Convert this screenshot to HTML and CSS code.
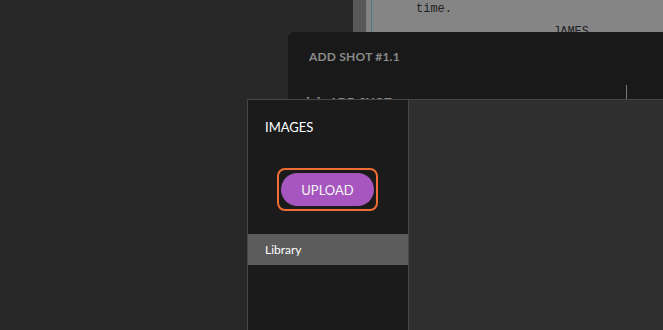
FILE: index.html
```html
<!DOCTYPE html>
<html lang="en">
<head>
    <meta charset="UTF-8">
    <title>Add Shot - Images</title>
    <link rel="stylesheet" href="styles.css">
</head>
<body>
    <!-- script page behind the dialogs -->
    <div class="script-page">
        <div class="page-gutter"></div>
        <div class="page-sheet">
            <p class="line action">time.</p>
            <p class="line character">JAMES</p>
        </div>
    </div>

    <div class="shot-dialog">
        <h4 class="dialog-title">ADD SHOT #1.1</h4>
        <div class="dialog-row">
            <span class="toggle"><span class="bracket">[&ndash;]</span>ADD SHOT</span>
            <span class="divider"></span>
        </div>
    </div>

    <div class="images-panel">
        <div class="sidebar">
            <h3 class="sidebar-title">IMAGES</h3>
            <div class="upload-wrap">
                <button class="btn-upload">UPLOAD</button>
            </div>
            <div class="nav-item active">Library</div>
        </div>
        <div class="content"></div>
    </div>
</body>
</html>
```

FILE: styles.css
```css
body {
    background-color: #282828;
    font-family: Lato, 'Open Sans', sans-serif;
    margin: 0;
    width: 663px;
    height: 330px;
    overflow: hidden;
    position: relative;
}
.script-page {
    position: absolute;
    left: 353px;
    top: 0;
    width: 310px;
    height: 32px;
    display: flex;
    overflow: hidden;
}
.page-gutter {
    width: 13px;
    background-color: #585858;
}
.page-sheet {
    flex: 1;
    background-color: #858585;
    border-left: 1px solid #7c7c7c;
    position: relative;
    padding-left: 49px;
}
.page-sheet::before {
    content: "";
    position: absolute;
    left: 4px;
    top: 0;
    bottom: 0;
    width: 1px;
    background-color: #4f7a80;
}
.line {
    margin: 0;
    font-family: 'Liberation Mono', monospace;
    font-size: 12px;
    color: #222222;
}
.action {
    padding-top: 2px;
}
.character {
    padding-left: 137px;
    padding-top: 9px;
}
.shot-dialog {
    position: absolute;
    left: 288px;
    top: 32px;
    right: 0;
    height: 80px;
    background-color: #191919;
    border-top-left-radius: 6px;
    padding: 0 0 0 21px;
}
.dialog-title {
    margin: 17px 0 0;
    font-size: 12px;
    font-weight: bold;
    color: #8a8a8a;
    letter-spacing: 0.2px;
}
.dialog-row {
    display: flex;
    align-items: flex-start;
    margin-top: 21px;
}
.toggle {
    font-size: 12px;
    font-weight: bold;
    color: #8a8a8a;
    margin-left: -3px;
    margin-top: 9px;
}
.bracket {
    margin-right: 9px;
}
.divider {
    width: 1px;
    height: 17px;
    background-color: #7a7a7a;
    margin-left: 235px;
}
.images-panel {
    position: absolute;
    left: 247px;
    top: 99px;
    right: 0;
    bottom: 0;
    display: flex;
    border-top: 1px solid #464646;
    border-left: 1px solid #464646;
}
.sidebar {
    width: 160px;
    background-color: #1b1b1b;
    background-image: radial-gradient(#262626 0.6px, transparent 0.7px);
    background-size: 4px 4px;
    border-right: 1px solid #464646;
}
.sidebar-title {
    margin: 19px 0 0 17px;
    font-size: 13px;
    font-weight: normal;
    color: #ffffff;
}
.upload-wrap {
    margin: 33px 0 0 29px;
    width: 97px;
    height: 39px;
    border: 2px solid #f06d35;
    border-radius: 8px;
    display: flex;
    align-items: center;
    justify-content: center;
}
.btn-upload {
    width: 93px;
    height: 33px;
    border: none;
    border-radius: 17px;
    background-color: #a856bf;
    color: #f3f3f3;
    font-family: Lato, sans-serif;
    font-size: 13px;
    cursor: pointer;
}
.nav-item {
    margin-top: 23px;
    height: 31px;
    line-height: 31px;
    padding-left: 17px;
    font-size: 12px;
    color: #ffffff;
}
.nav-item.active {
    background-color: #5c5c5c;
}
.content {
    flex: 1;
    background-color: #2f2f2f;
}
```
